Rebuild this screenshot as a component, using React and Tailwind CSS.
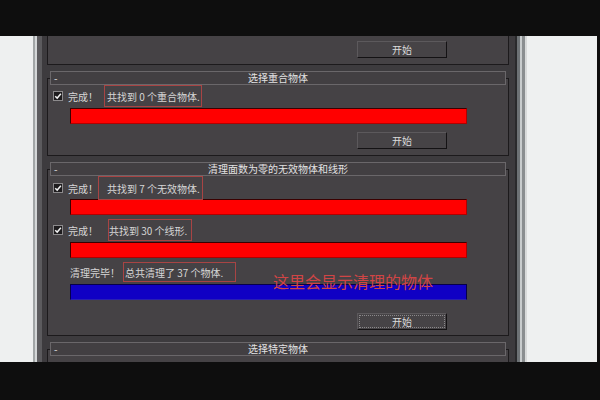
import React from 'react';

const Check = () => (
  <span className="flex h-[10px] w-[10px] items-center justify-center border border-[#8c8a8c] bg-[#1e1c1e]">
    <svg viewBox="0 0 10 10" className="h-[8px] w-[8px]">
      <path d="M1.5 5.2 L4 7.6 L8.6 2.2" stroke="#f2f2f2" strokeWidth="1.8" fill="none" />
    </svg>
  </span>
);

const Rollout = ({ title }) => (
  <div className="relative z-10 mx-[3px] grid h-[14px] grid-cols-[20px_1fr_20px] items-center border border-[#6a676a] bg-[#423f42] leading-none text-[#e2e2e2]">
    <span className="pl-[3px]">-</span>
    <span className="text-center">{title}</span>
    <span />
  </div>
);

const Bar = ({ blue }) => (
  <div
    className={
      blue
        ? 'ml-[22px] h-[16px] w-[397px] border border-[#06004a] border-b-[#2a20b0] bg-[#1000c4]'
        : 'ml-[22px] h-[16px] w-[397px] border border-[#3a0000] border-b-[#b00000] border-r-[#b00000] bg-[#ff0000]'
    }
  />
);

const StartBtn = ({ focused }) => (
  <div className="ml-[309px] flex h-[17px] w-[90px] items-center justify-center border border-t-[#5c595c] border-l-[#5c595c] border-r-[#141214] border-b-[#141214] bg-[#464346] text-[#dcdcdc]">
    {focused ? (
      <span className="flex h-[13px] w-[86px] items-center justify-center border border-dotted border-[#8a888a]">开始</span>
    ) : (
      '开始'
    )}
  </div>
);

export default function App() {
  return (
    <div className="flex h-[400px] w-[600px] flex-col overflow-hidden bg-[#0e0e0e] font-['Noto_Sans_CJK_SC','Noto_Sans',sans-serif] text-[10px] text-[#d6d6d6]">
      <div className="h-[36px] shrink-0" />

      <div className="flex h-[326px] shrink-0 overflow-hidden">
        <div className="w-[33px] bg-[#eef0f0]" />
        {/* left window frame */}
        <div className="w-[2px] bg-[#a2a6a7]" />
        <div className="w-[2px] bg-[#d4d7d8]" />
        <div className="w-[5px] bg-[#5c5b5e]" />

        {/* rollout panel */}
        <div className="w-[473px] overflow-hidden bg-[#3d3b3e] pl-[5px]">
          {/* partial box above */}
          <div className="w-[462px] border-x border-b border-[#1c1a1c] bg-[#454245] pt-[5px] pb-[6px]">
            <StartBtn />
          </div>

          {/* 选择重合物体 */}
          <div className="mt-[6px] w-[462px]">
            <Rollout title="选择重合物体" />
            <div className="-mt-[7px] border border-[#1c1a1c] bg-[#454245] pt-[6px] pb-[6px]">
              <div className="flex h-[22px] items-center pl-[5px]">
                <Check />
                <span className="ml-[5px] w-[30px]">完成！</span>
                <span className="ml-[6px] flex h-full items-center border border-[#a84444] pl-[2px] pr-[1px]">共找到 0 个重合物体.</span>
              </div>
              <div className="mt-[1px]">
                <Bar />
              </div>
              <div className="mt-[8px]">
                <StartBtn />
              </div>
            </div>
          </div>

          {/* 清理面数为零的无效物体和线形 */}
          <div className="mt-[6px] w-[462px]">
            <Rollout title="清理面数为零的无效物体和线形" />
            <div className="relative -mt-[7px] border border-[#1c1a1c] bg-[#454245] pt-[6px] pb-[5px]">
              <div className="mt-[1px] flex h-[22px] items-center pl-[5px]">
                <Check />
                <span className="ml-[5px] w-[30px]">完成！</span>
                <span className="flex h-[24px] items-center border border-[#a84444] pl-[8px] pr-[2px]">共找到 7 个无效物体.</span>
              </div>
              <Bar />
              <div className="mt-[4px] flex h-[22px] items-center pl-[5px]">
                <Check />
                <span className="ml-[5px] w-[30px]">完成！</span>
                <span className="ml-[10px] flex h-full items-center border border-[#a84444] pr-[4px]">共找到 30 个线形.</span>
              </div>
              <div className="mt-[1px]">
                <Bar />
              </div>
              <div className="mt-[4px] flex h-[20px] items-center pl-[22px]">
                <span className="w-[53px]">清理完毕！</span>
                <span className="flex h-full items-center border border-[#a84444] pl-[1px] pr-[12px]">总共清理了 37 个物体.</span>
              </div>
              <div className="mt-[2px]">
                <Bar blue />
              </div>
              <div className="mt-[13px]">
                <StartBtn focused />
              </div>

              <span className="absolute left-[225px] top-[103px] text-[16px] leading-[16px] text-[#d04545]">这里会显示清理的物体</span>
            </div>
          </div>

          {/* 选择特定物体 */}
          <div className="mt-[6px] w-[462px]">
            <Rollout title="选择特定物体" />
            <div className="-mt-[7px] h-[40px] border border-[#1c1a1c] bg-[#454245]" />
          </div>
        </div>

        {/* right window frame */}
        <div className="w-[2px] bg-[#2a2a2c]" />
        <div className="w-[3px] bg-[#6d7275]" />
        <div className="w-[2px] bg-[#c8cccd]" />
        <div className="w-[3px] bg-[#8a8e90]" />
        <div className="w-[2px] bg-[#d8dada]" />
        <div className="w-[70px] bg-[#eef0f0]" />
        <div className="w-[3px]" />
      </div>

      <div className="flex-1" />
    </div>
  );
}
